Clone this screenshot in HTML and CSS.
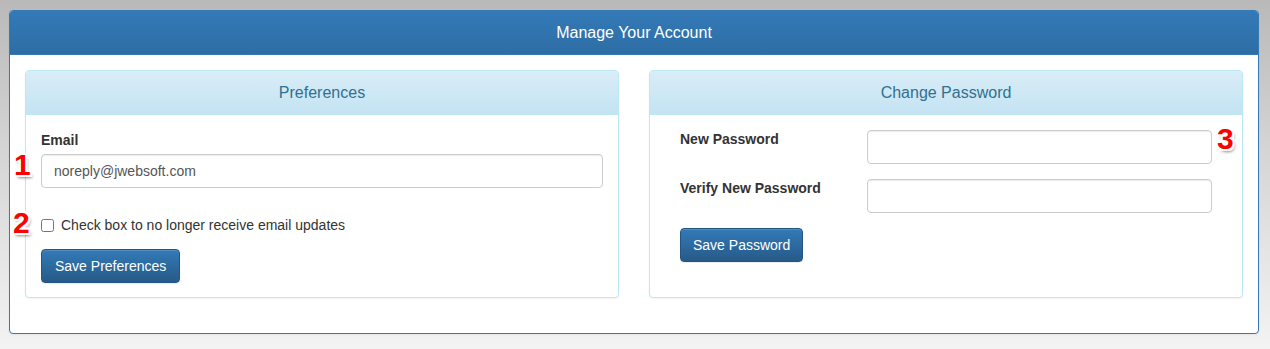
FILE: index.html
```html
<!DOCTYPE html>
<html lang="en">
<head>
    <meta charset="UTF-8">
    <meta name="viewport" content="width=device-width, initial-scale=1.0">
    <title>Manage Your Account</title>
    <link rel="stylesheet" href="styles.css">
</head>
<body>
    <div class="panel panel-primary">
        <div class="panel-heading">Manage Your Account</div>
        <div class="panel-body">
            <div class="row">
                <div class="panel panel-info">
                    <div class="panel-heading">Preferences</div>
                    <div class="panel-body">
                        <div class="form-group">
                            <label for="email">Email</label>
                            <input type="text" id="email" class="form-control" value="noreply@jwebsoft.com">
                            <span class="marker marker-1">1</span>
                        </div>
                        <div class="checkbox">
                            <label><input type="checkbox"> Check box to no longer receive email updates</label>
                            <span class="marker marker-2">2</span>
                        </div>
                        <button class="btn">Save Preferences</button>
                    </div>
                </div>

                <div class="panel panel-info">
                    <div class="panel-heading">Change Password</div>
                    <div class="panel-body pw-body">
                        <div class="form-row">
                            <label for="newPass">New Password</label>
                            <input type="password" id="newPass" class="form-control">
                            <span class="marker marker-3">3</span>
                        </div>
                        <div class="form-row">
                            <label for="verifyPass">Verify New Password</label>
                            <input type="password" id="verifyPass" class="form-control">
                        </div>
                        <button class="btn btn-pw">Save Password</button>
                    </div>
                </div>
            </div>
        </div>
    </div>
</body>
</html>
```

FILE: styles.css
```css
body {
    font-family: "Liberation Sans", Arial, sans-serif;
    font-size: 14px;
    line-height: 20px;
    color: #333;
    margin: 0;
    padding: 10px 11px 15px 9px;
    background: linear-gradient(to bottom, #b9b9b9 0%, #d6d6d6 45%, #f3f3f3 100%);
    min-height: 324px;
}

.panel {
    background-color: #fff;
    border: 1px solid transparent;
    border-radius: 4px;
    box-shadow: 0 1px 2px rgba(0, 0, 0, 0.05);
}

.panel-heading {
    text-align: center;
    font-size: 16px;
    height: 43px;
    line-height: 43px;
    border-top-left-radius: 3px;
    border-top-right-radius: 3px;
}

.panel-primary {
    border-color: #337ab7;
}

.panel-primary > .panel-heading {
    color: #fff;
    background: linear-gradient(to bottom, #337ab7 0%, #2e6da4 100%);
    border-bottom: 1px solid #337ab7;
}

.panel-primary > .panel-body {
    padding: 15px 15px 35px;
}

.row {
    display: grid;
    grid-template-columns: 1fr 1fr;
    column-gap: 30px;
}

.panel-info {
    border-color: #bce8f1;
}

.panel-info > .panel-heading {
    color: #31708f;
    background: linear-gradient(to bottom, #d9edf7 0%, #c4e3f3 100%);
    border-bottom: 1px solid #bce8f1;
}

.panel-info .panel-body {
    padding: 15px;
    height: 152px;
}

.form-group {
    position: relative;
    margin-bottom: 15px;
}

.form-group > label {
    display: block;
    font-weight: bold;
    margin-bottom: 4px;
}

.form-control {
    display: block;
    box-sizing: border-box;
    width: 100%;
    height: 34px;
    padding: 6px 12px;
    font-family: inherit;
    font-size: 14px;
    color: #555;
    background-color: #fff;
    border: 1px solid #ccc;
    border-radius: 4px;
    box-shadow: inset 0 1px 1px rgba(0, 0, 0, 0.075);
}

.checkbox {
    position: relative;
    margin: 27px 0 14px;
}

.checkbox label {
    display: flex;
    align-items: center;
    gap: 7px;
}

.checkbox input {
    margin: 0;
    width: 13px;
    height: 13px;
}

.btn {
    display: block;
    font-family: inherit;
    font-size: 14px;
    line-height: 20px;
    padding: 6px 13px;
    color: #fff;
    background: linear-gradient(to bottom, #337ab7 0%, #265a88 100%);
    border: 1px solid #245580;
    border-radius: 4px;
    box-shadow: inset 0 1px 0 rgba(255, 255, 255, 0.15), 0 1px 1px rgba(0, 0, 0, 0.075);
    cursor: pointer;
}

.btn-pw {
    padding: 6px 12px;
}

.pw-body {
    padding-left: 30px !important;
}

.form-row {
    position: relative;
    display: grid;
    grid-template-columns: 187px 345px;
    margin-bottom: 15px;
}

.form-row label {
    font-weight: bold;
    margin-top: -1px;
}

.marker {
    position: absolute;
    font-family: "Liberation Sans", Arial, sans-serif;
    font-size: 30px;
    line-height: 30px;
    font-weight: bold;
    color: #f00;
    text-shadow:
        -2px -2px 0 #fff, 2px -2px 0 #fff, -2px 2px 0 #fff, 2px 2px 0 #fff,
        0 -2px 0 #fff, 0 2px 0 #fff, -2px 0 0 #fff, 2px 0 0 #fff,
        2px 3px 3px rgba(0, 0, 0, 0.45);
}

.marker-1 {
    left: -27px;
    top: 20px;
}

.marker-2 {
    left: -28px;
    top: -7px;
}

.marker-3 {
    left: 537px;
    top: -6px;
}
```
